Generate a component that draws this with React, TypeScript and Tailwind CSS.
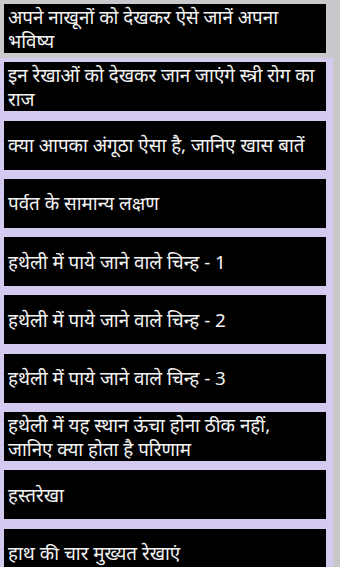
import React from "react";

const items: string[] = [
  "अपने नाखूनों को देखकर ऐसे जानें अपना भविष्य",
  "इन रेखाओं को देखकर जान जाएंगे स्त्री रोग का राज",
  "क्या आपका अंगूठा ऐसा है, जानिए खास बातें",
  "पर्वत के सामान्य लक्षण",
  "हथेली में पाये जाने वाले चिन्ह - 1",
  "हथेली में पाये जाने वाले चिन्ह - 2",
  "हथेली में पाये जाने वाले चिन्ह - 3",
  "हथेली में यह स्थान ऊंचा होना ठीक नहीं, जानिए क्या होता है परिणाम",
  "हस्तरेखा",
  "हाथ की चार मुख्यत रेखाएं",
];

export default function App() {
  return (
    <div
      className="w-[340px] h-[567px] overflow-hidden bg-[#d4caef] relative"
      style={{ fontFamily: '"Noto Sans", "Noto Sans Devanagari", sans-serif' }}
    >
      <div className="absolute left-0 top-0 w-[340px] h-[58px] bg-[#c9c9cb]" />
      <div className="absolute left-[333px] top-0 w-[7px] h-[567px] bg-[#c8c8cc]" />
      <div className="relative flex flex-col gap-[9.3px] pt-[4px] pl-[4px] w-[326px]">
        {items.map((t, i) => (
          <div
            key={i}
            className="h-[49px] shrink-0 bg-black flex items-center pl-[4px] pr-[8px] text-[#f2f2f2] text-[18.8px] leading-[24px]"
          >
            <span>{t}</span>
          </div>
        ))}
      </div>
    </div>
  );
}
